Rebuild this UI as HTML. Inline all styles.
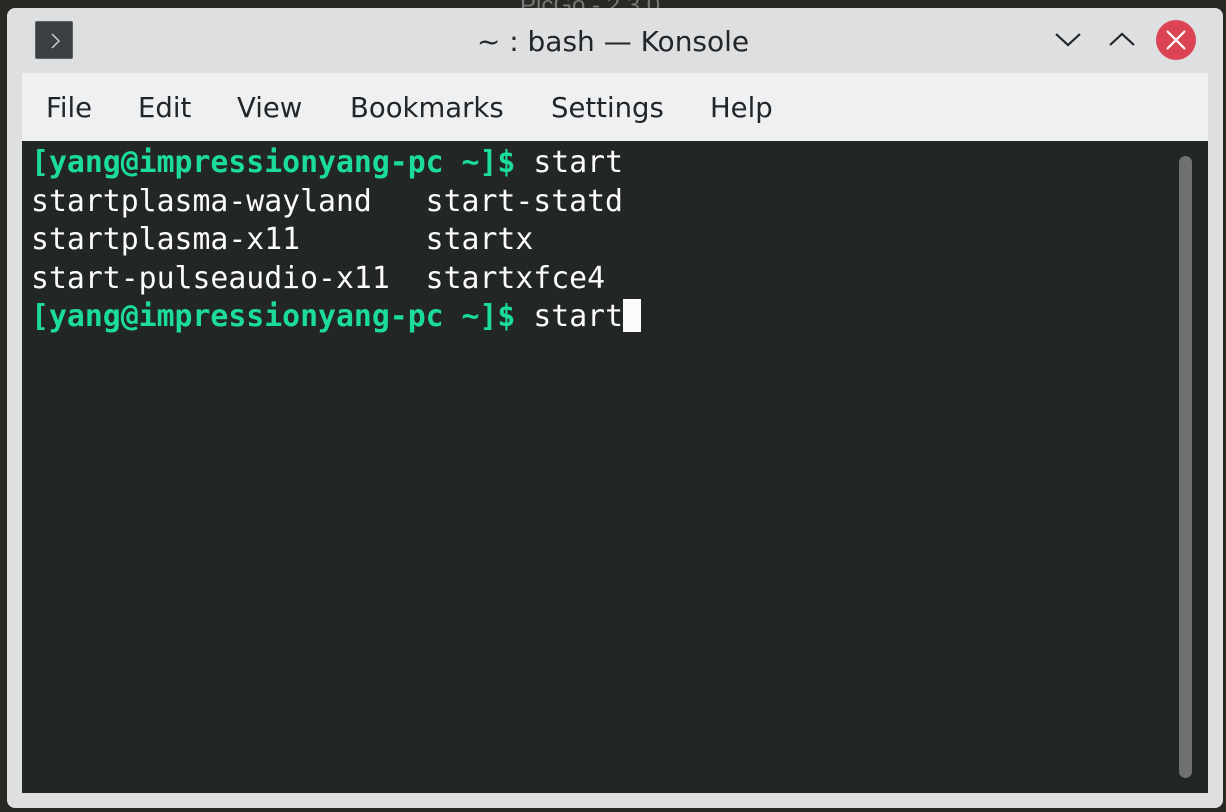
<!DOCTYPE html>
<html><head><meta charset="utf-8"><style>
*{margin:0;padding:0;box-sizing:border-box}
body{width:1226px;height:812px;background:#2b2926;position:relative;overflow:hidden;font-family:"Liberation Sans","DejaVu Sans",sans-serif}
.win{position:absolute;left:7px;top:8px;width:1216px;height:800px;background:#dedfe0;border-radius:8px}
.icon{position:absolute;left:35px;top:21px;width:38px;height:38px;background:#3b4143;border:1px solid #5a6062;border-radius:2px}
.title{position:absolute;left:0;width:1226px;top:25px;text-align:center;font-size:28px;color:#232629;font-family:"DejaVu Sans",sans-serif}
.menu{position:absolute;left:22px;top:73px;width:1186px;height:68px;background:#eff0f1}
.menu span{position:absolute;top:19px;font-size:27.5px;color:#232629;font-family:"DejaVu Sans",sans-serif}
.term{position:absolute;left:22px;top:141px;width:1186px;height:652px;background:#232627}
.txt{position:absolute;left:31px;top:144px;font-family:"DejaVu Sans Mono",monospace;font-size:29.8px;line-height:38.5px;color:#fcfcfc;white-space:pre}
.g{color:#1cdc9a;font-weight:bold}
.cur{display:inline-block;width:18px;height:33px;background:#fcfcfc;vertical-align:-6px}
.sb{position:absolute;left:1179px;top:156px;width:13px;height:622px;background:#6e7071;border-radius:7px}
.bg{position:absolute;font-size:24px;color:#777;top:-8px;left:520px}
</style></head><body>
<div class="bg">PicGo - 2.3.0</div>
<div class="win"></div>
<div class="icon"><svg width="38" height="38"><path d="M16 12 L23 19 L16 26" stroke="#ccc" stroke-width="1.5" fill="none"/></svg></div>
<div class="title">~ : bash — Konsole</div>
<svg style="position:absolute;left:1050px;top:28px" width="160" height="30">
<path d="M6 6 L18 17 L30 6" stroke="#232629" stroke-width="2.2" fill="none"/>
<path d="M60 17 L72 6 L84 17" stroke="#232629" stroke-width="2.2" fill="none"/>
</svg>
<svg style="position:absolute;left:1155px;top:19px" width="42" height="42">
<circle cx="21" cy="21" r="20" fill="#da4453"/>
<path d="M12 12 L30 30 M30 12 L12 30" stroke="#fff" stroke-width="2.2"/>
</svg>
<div class="menu">
<span style="left:24px">File</span><span style="left:116px">Edit</span><span style="left:215px">View</span><span style="left:328px">Bookmarks</span><span style="left:529px">Settings</span><span style="left:688px">Help</span>
</div>
<div class="term"></div>
<div class="sb"></div>
<div class="txt"><span class="g">[yang@impressionyang-pc ~]$</span> start
startplasma-wayland   start-statd
startplasma-x11       startx
start-pulseaudio-x11  startxfce4
<span class="g">[yang@impressionyang-pc ~]$</span> start<span class="cur"></span></div>
</body></html>
